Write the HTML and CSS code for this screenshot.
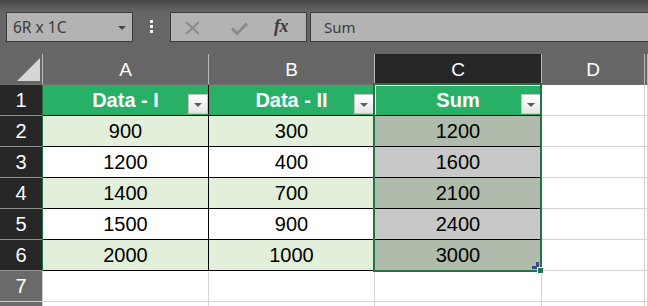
FILE: index.html
```html
<!DOCTYPE html>
<html>
<head>
<meta charset="utf-8">
<link rel="stylesheet" href="styles.css">
</head>
<body>
<div class="app">
  <div class="toolbar">
    <div class="namebox"><span>6R x 1C</span><span class="caret"></span></div>
    <div class="grip"><i></i><i></i><i></i></div>
    <div class="fbtns">
      <svg class="ico-x" width="15" height="14" viewBox="0 0 15 14"><path d="M1 1 L14 13 M14 1 L1 13" stroke="#8a8a8a" stroke-width="2" fill="none"/></svg>
      <svg class="ico-check" width="17" height="13" viewBox="0 0 17 13"><path d="M1 6.5 L6 11.5 L16 1.5" stroke="#8a8a8a" stroke-width="3" fill="none"/></svg>
      <span class="fx">fx</span>
    </div>
    <div class="finput">Sum</div>
  </div>
  <div class="sheet">
    <div class="corner"><span class="tri"></span></div>
    <div class="ch">A</div>
    <div class="ch">B</div>
    <div class="ch active">C</div>
    <div class="ch">D</div>
    <div class="ch"></div>

    <div class="rh">1</div>
    <div class="c t th">Data - I<span class="filt"></span></div>
    <div class="c t th">Data - II<span class="filt"></span></div>
    <div class="c t th cur">Sum<span class="filt"></span></div>
    <div class="c"></div>
    <div class="c"></div>

    <div class="rh">2</div>
    <div class="c t g">900</div>
    <div class="c t g">300</div>
    <div class="c t g s">1200</div>
    <div class="c"></div>
    <div class="c"></div>

    <div class="rh">3</div>
    <div class="c t">1200</div>
    <div class="c t">400</div>
    <div class="c t s">1600</div>
    <div class="c"></div>
    <div class="c"></div>

    <div class="rh">4</div>
    <div class="c t g">1400</div>
    <div class="c t g">700</div>
    <div class="c t g s">2100</div>
    <div class="c"></div>
    <div class="c"></div>

    <div class="rh">5</div>
    <div class="c t">1500</div>
    <div class="c t">900</div>
    <div class="c t s">2400</div>
    <div class="c"></div>
    <div class="c"></div>

    <div class="rh">6</div>
    <div class="c t g">2000</div>
    <div class="c t g">1000</div>
    <div class="c t g s">3000</div>
    <div class="c"></div>
    <div class="c"></div>

    <div class="rh off">7</div>
    <div class="c"></div>
    <div class="c"></div>
    <div class="c"></div>
    <div class="c"></div>
    <div class="c"></div>

    <div class="rh off"></div>
    <div class="c"></div>
    <div class="c"></div>
    <div class="c"></div>
    <div class="c"></div>
    <div class="c"></div>

    <div class="selection">
      <svg class="resize" width="7" height="7" viewBox="0 0 7 7"><path d="M4 0 H7 V7 H0 V4 H4 Z" fill="#3b4a90"/></svg>
      <span class="handle"></span>
    </div>
  </div>
</div>
</body>
</html>
```
FILE: styles.css
```css
* { box-sizing: border-box; }
html, body { margin: 0; padding: 0; }
body {
  background: #666666;
  width: 648px;
  height: 306px;
  overflow: hidden;
  font-family: "Liberation Sans", Arial, sans-serif;
}
.app { width: 648px; height: 306px; overflow: hidden; }

.toolbar {
  height: 54px;
  display: flex;
  align-items: flex-start;
  padding: 12px 0 0 6px;
  background: linear-gradient(to bottom, #474747 0px, #5a5a5a 7px, #636363 11px, #666666 13px);
  font-family: "Noto Sans", "Open Sans", sans-serif;
  font-size: 15px;
  color: #3c3c3c;
  overflow: hidden;
}
.namebox {
  width: 127px;
  height: 30px;
  border: 1px solid #3b3b3b;
  background: #b3b3b3;
  display: flex;
  align-items: center;
  justify-content: space-between;
  padding: 0 6px 0 6px;
  font-size: 15.5px;
}
.caret {
  width: 0;
  height: 0;
  border-left: 4px solid transparent;
  border-right: 4px solid transparent;
  border-top: 4px solid #474747;
  margin-top: 1px;
}
.grip {
  margin-left: 17px;
  padding-top: 8px;
  display: flex;
  flex-direction: column;
  gap: 2px;
}
.grip i {
  display: block;
  width: 3px;
  height: 3px;
  background: #f2f2f2;
}
.fbtns {
  margin-left: 17px;
  width: 137px;
  height: 30px;
  border: 1px solid #3b3b3b;
  background: #b3b3b3;
  display: flex;
  align-items: center;
}
.ico-x { margin-left: 14px; margin-top: 1px; }
.ico-check { margin-left: 31px; margin-top: 2px; }
.fx {
  margin-left: 26px;
  font-family: "Liberation Serif", "DejaVu Serif", serif;
  font-style: italic;
  font-weight: bold;
  font-size: 18px;
  color: #3a3a3a;
  letter-spacing: -0.5px;
  margin-top: -1px;
}
.finput {
  margin-left: 3px;
  flex: 1;
  margin-right: -3px;
  height: 30px;
  border: 1px solid #3b3b3b;
  background: #b3b3b3;
  padding-left: 13px;
  display: flex;
  align-items: center;
}

.sheet {
  position: relative;
  display: grid;
  grid-template-columns: 43px 166px 166px 167px 103px 1fr;
  grid-template-rows: repeat(9, 31px);
  font-size: 20px;
}
.corner {
  background: #666666;
  border-right: 1px solid #b9b9b9;
  border-bottom: 1px solid #6f6f6f;
  display: flex;
  align-items: flex-end;
  justify-content: flex-end;
  padding: 0 2px 3px 0;
}
.tri {
  width: 0;
  height: 0;
  border-left: 23px solid transparent;
  border-bottom: 23px solid #d6d6d6;
}
.ch {
  background: #666666;
  color: #ffffff;
  font-size: 19px;
  border-right: 1px solid #b9b9b9;
  border-bottom: 1px solid #6f6f6f;
  display: flex;
  align-items: center;
  justify-content: center;
  padding-top: 2px;
}
.ch.active { background: #262626; }
.rh {
  background: #262626;
  color: #ffffff;
  border-right: 1px solid #217346;
  border-bottom: 1px solid #8e8e8e;
  display: flex;
  align-items: center;
  justify-content: center;
  padding-top: 1px;
}
.rh.off {
  background: #6a6a6a;
  border-right: 1px solid #cfcfcf;
  border-bottom: 1px solid #cfcfcf;
}
.c {
  background: #ffffff;
  color: #000000;
  border-right: 1px solid #d4d4d4;
  border-bottom: 1px solid #d4d4d4;
  display: flex;
  align-items: center;
  justify-content: center;
  line-height: 30px;
  position: relative;
}
.c.t { border-color: #000000; }
.c.g { background: #e2efda; }
.c.s { background: #c8c8c8; }
.c.g.s { background: #b0bcab; }
.c.th {
  background: #29b067;
  color: #ffffff;
  font-weight: bold;
}
.c.cur { box-shadow: inset 1px 1px 0 #ffffff; }
.filt {
  position: absolute;
  right: 0;
  bottom: 1px;
  width: 20px;
  height: 20px;
  border: 1px solid #c4c4c4;
  background: linear-gradient(to bottom, #ffffff, #e6e6e6);
  display: flex;
  align-items: center;
  justify-content: center;
}
.filt::after {
  content: "";
  width: 0;
  height: 0;
  border-left: 4px solid transparent;
  border-right: 4px solid transparent;
  border-top: 4px solid #5c5c5c;
  margin-top: 1px;
}
.selection {
  position: absolute;
  grid-column: 4 / 5;
  grid-row: 2 / 8;
  top: -2px;
  left: -2px;
  right: 0;
  bottom: -1px;
  border: 2px solid #217346;
  pointer-events: none;
}
.resize {
  position: absolute;
  right: 1px;
  bottom: 1px;
}
.handle {
  position: absolute;
  right: -4px;
  bottom: -4px;
  width: 7px;
  height: 7px;
  background: #217346;
  border: 1px solid #ffffff;
}
```
